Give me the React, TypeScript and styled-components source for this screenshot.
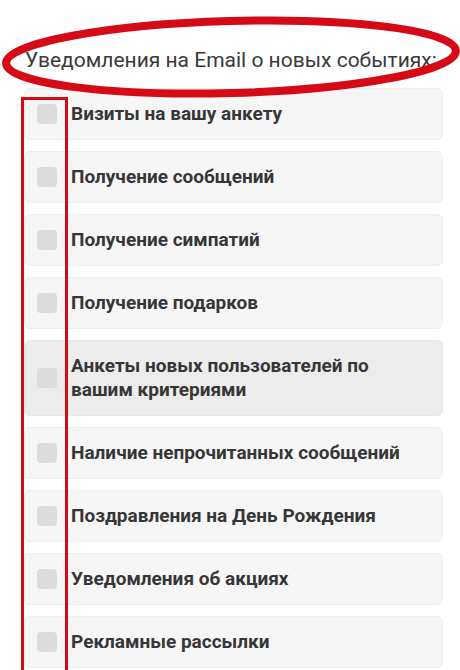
import React from 'react'
import styled, { createGlobalStyle } from 'styled-components'

const items: { label: string; active?: boolean }[] = [
  { label: 'Визиты на вашу анкету' },
  { label: 'Получение сообщений' },
  { label: 'Получение симпатий' },
  { label: 'Получение подарков' },
  { label: 'Анкеты новых пользователей по вашим критериями', active: true },
  { label: 'Наличие непрочитанных сообщений' },
  { label: 'Поздравления на День Рождения' },
  { label: 'Уведомления об акциях' },
  { label: 'Рекламные рассылки' },
]

const GlobalStyle = createGlobalStyle`
  html, body {
    margin: 0;
    background: #fff;
    overflow: hidden;
  }
  body {
    font-family: Roboto, "Liberation Sans", Arial, sans-serif;
  }
`

export default function App() {
  return (
    <Page>
      <GlobalStyle />
      <Heading>Уведомления на Email о новых событиях:</Heading>
      <List>
        {items.map((it, i) => (
          <Option key={i} active={it.active}>
            <Box />
            <Label>{it.label}</Label>
          </Option>
        ))}
      </List>

      {/* red annotation marks drawn over the screenshot */}
      <Ellipse width="460" height="110" viewBox="0 0 460 110">
        <ellipse
          cx="231"
          cy="57"
          rx="225"
          ry="36"
          fill="none"
          stroke="#d60a16"
          strokeWidth="8"
          transform="rotate(-1.6 231 57)"
        />
      </Ellipse>
      <ColumnMark />
    </Page>
  )
}

const Page = styled.div`
  position: relative;
  height: 670px;
  overflow: hidden;
  padding: 48px 17px 0 24px;
  box-sizing: border-box;
`
const Heading = styled.div`
  font-size: 21px;
  line-height: 25px;
  color: #3a3a3a;
  margin: 0 0 15px 1px;
  white-space: nowrap;
`
const List = styled.div`
  display: flex;
  flex-direction: column;
  gap: 11px;
`
const Option = styled.div<{ active?: boolean }>`
  display: flex;
  align-items: center;
  gap: 14px;
  padding: 13px 25px 13px 12px;
  background: ${({ active }) => (active ? '#ececec' : '#f6f6f6')};
  border: 1px solid ${({ active }) => (active ? '#e6e6e6' : '#eeeeee')};
  border-radius: 6px;
  box-sizing: border-box;
`
const Box = styled.span`
  flex: none;
  width: 20px;
  height: 20px;
  border-radius: 4px;
  background: #dcdcdc;
`
const Label = styled.span`
  font-size: 19px;
  line-height: 24px;
  font-weight: 700;
  color: #363636;
`
const Ellipse = styled.svg`
  position: absolute;
  left: 0;
  top: 0;
  pointer-events: none;
`
const ColumnMark = styled.div`
  position: absolute;
  left: 21px;
  top: 97px;
  width: 41px;
  height: 600px;
  border: 3px solid #d60a16;
  pointer-events: none;
`
